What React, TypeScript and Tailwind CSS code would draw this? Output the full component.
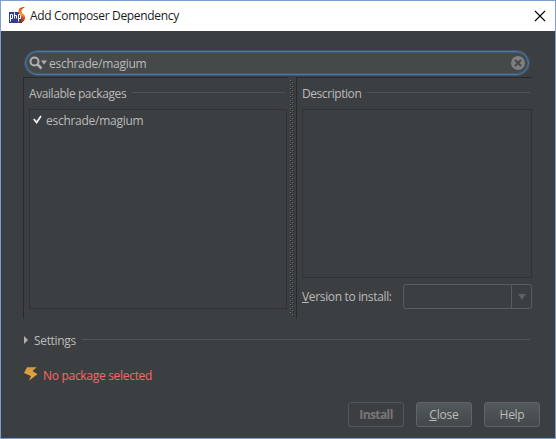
import React from "react";

const font = "font-['Open_Sans','Noto_Sans',sans-serif]";

function Heading({ children, w }: { children: React.ReactNode; w: string }) {
  return (
    <div className="flex h-4 items-center">
      <span className={`shrink-0 whitespace-nowrap leading-4 pt-[2px] ${w}`}>{children}</span>
      <span className="mb-[2px] h-px flex-1 bg-[#515456]" />
    </div>
  );
}

function Splitter() {
  return (
    <svg className="mt-[3px] h-[236px] w-2 shrink-0" shapeRendering="crispEdges">
      <defs>
        <pattern id="grip" width="8" height="4" patternUnits="userSpaceOnUse">
          <rect x="2" y="0" width="1" height="1" fill="#6e7172" />
          <rect x="3" y="1" width="1" height="1" fill="#252728" />
          <rect x="4" y="2" width="1" height="1" fill="#6e7172" />
          <rect x="5" y="3" width="1" height="1" fill="#252728" />
        </pattern>
      </defs>
      <rect width="8" height="236" fill="url(#grip)" />
    </svg>
  );
}

export default function App() {
  return (
    <div className={`flex h-[439px] w-[556px] flex-col overflow-hidden border border-[#7ba0cf] bg-[#3c3f41] text-[12px] text-[#bbbbbb] ${font}`}>
      <header className="flex h-[30px] shrink-0 items-center bg-white pl-2 pr-[9px] text-[#1a1a1a]">
        <svg className="mb-[2px]" width="17" height="17" viewBox="0 0 17 17">
          <defs>
            <linearGradient id="flame" x1="0" y1="0" x2="0" y2="1">
              <stop offset="0" stopColor="#c2410f" />
              <stop offset=".45" stopColor="#ffa02c" />
              <stop offset=".7" stopColor="#d9480f" />
              <stop offset="1" stopColor="#8f2008" />
            </linearGradient>
          </defs>
          <rect x="0" y="5" width="13" height="11" fill="#2f3b94" />
          <path d="M1.500 14.500V7.500h2v4h-2M5.500 5.500v6M5.500 8.500h2v3M9.500 14.500V7.500h2v4h-2" fill="none" stroke="#fff" />
          <path d="M16 0C12 0 9.500 1 9.500 4.500c0 3 3.500 4 3 7-.3 2-1.500 3-3.500 4.500 4 .2 7-2 7-5.500s-3.500-4-3.500-6.500C12.500 2 14 1.500 16 0z" fill="url(#flame)" />
        </svg>
        <span className="ml-1 whitespace-nowrap leading-4 tracking-[-0.33px]">Add Composer Dependency</span>
        <svg className="ml-auto" width="12" height="12" viewBox="0 0 12 12">
          <path d="M1 1l10 10M11 1L1 11" stroke="#000" strokeWidth="1.1" />
        </svg>
      </header>
      <div className="flex flex-1 flex-col pl-[22px] pt-[19px]">
        <div className="ml-px h-[26px] w-[506px] rounded-full border border-[#405469]">
          <div className="flex h-6 items-center rounded-full border border-[#4a7aab] bg-[#45494a] pl-[3px] pr-[3px] shadow-[inset_0_0_0_1px_#45586b]">
            <svg width="19" height="14" viewBox="0 0 19 14">
              <circle cx="5.5" cy="5.5" r="4" fill="none" stroke="#afb1b3" strokeWidth="2" />
              <path d="M8.5 8.5l4 4" stroke="#afb1b3" strokeWidth="2.5" />
              <path d="M12 4.500h6l-3 4z" fill="#afb1b3" />
            </svg>
            <span className="ml-px pt-[2px] leading-4 tracking-[-0.27px]">eschrade/magium</span>
            <svg className="ml-auto" width="14" height="14" viewBox="0 0 14 14">
              <circle cx="7" cy="7" r="7" fill="#7d7f80" />
              <path d="M4 4l6 6M10 4l-6 6" stroke="#45494a" strokeWidth="2" />
            </svg>
          </div>
        </div>
        <div className="mt-px flex h-[242px]">
          <section className="w-[265px] border-l border-t border-[#282a2c] pl-[5px] pt-[7px]">
            <div className="w-[256px] tracking-[-0.43px]"><Heading w="w-[103px]">Available packages</Heading></div>
            <div className="mt-2 flex h-[200px] w-[258px] items-start border border-[#2f3132] pl-[3px] pt-[3px]">
              <svg className="mt-[2px]" width="9" height="9" viewBox="0 0 9 9">
                <path d="M.8 4l2.800 3.500L8 1" fill="none" stroke="#eee" strokeWidth="1.8" />
              </svg>
              <span className="ml-1 leading-4 tracking-[-0.27px]">eschrade/magium</span>
            </div>
          </section>
          <Splitter />
          <section className="w-[236px] border-l border-t border-[#282a2c] pl-[5px] pt-[7px]">
            <div className="w-[228px] tracking-[-0.43px]"><Heading w="w-[65px]">Description</Heading></div>
            <div className="mt-2 h-[169px] w-[230px] border border-[#2f3132]" />
            <div className="mt-[6px] flex items-center">
              <label className="w-[101px] whitespace-nowrap leading-4 tracking-[-0.34px]"><u>V</u>ersion to install:</label>
              <div className="flex h-[25px] w-[129px] justify-end rounded-[3px] border border-[#5a5d5e]">
                <div className="flex w-5 items-center justify-center border-l border-[#5a5d5e]">
                  <svg width="8" height="6"><path d="M0 0h8L4 6z" fill="#5e6162" /></svg>
                </div>
              </div>
            </div>
          </section>
        </div>
        <div className="mt-[13px] flex h-4 w-[507px] items-center">
          <svg className="mb-px ml-px" width="4" height="8"><path d="M0 0l4 4-4 4z" fill="#afb1b3" /></svg>
          <div className="ml-[6px] flex-1 tracking-[-0.33px]"><Heading w="w-[48px]">Settings</Heading></div>
        </div>
        <div className="mt-[20px] flex h-4 items-center text-[#ff6464]">
          <svg className="mb-[4px] ml-px" width="14" height="14" viewBox="0 0 14 14">
            <defs>
              <linearGradient id="bolt" x1="0" y1="0" x2="0" y2="1">
                <stop offset="0" stopColor="#d29d45" />
                <stop offset="1" stopColor="#eda430" />
              </linearGradient>
            </defs>
            <path d="M3 .3h9.700L8.500 4l5 3.200L5 13.600 7 9 0 6z" fill="url(#bolt)" />
          </svg>
          <span className="ml-[5px] tracking-[-0.3px]">No package selected</span>
        </div>
        <footer className="mt-[18px] flex gap-3 pl-[325px]">
          <button className="h-[25px] w-14 rounded-[3px] border border-[#55585a] font-bold tracking-[-0.6px] text-[#777777]">Install</button>
          <button className="h-[25px] w-14 rounded-[3px] border border-[#616567] bg-linear-to-b from-[#535a5b] to-[#43484a] tracking-[-0.2px]"><u>C</u>lose</button>
          <button className="h-[25px] w-14 rounded-[3px] border border-[#616567] bg-linear-to-b from-[#535a5b] to-[#43484a] tracking-[-0.3px]">Help</button>
        </footer>
      </div>
    </div>
  );
}
